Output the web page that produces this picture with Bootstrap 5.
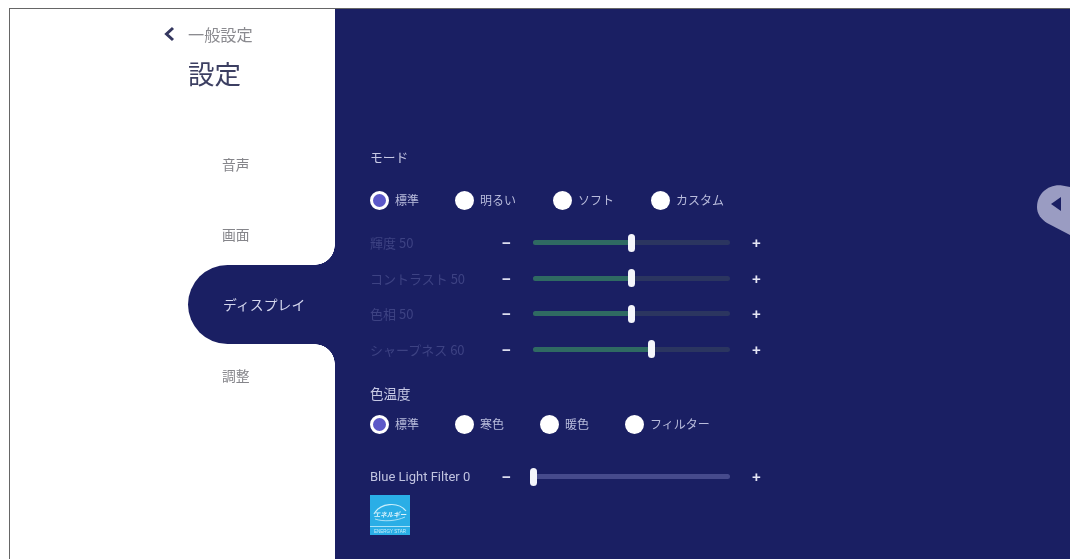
<!DOCTYPE html>
<html lang="ja">

<head>
    <meta charset="UTF-8">
    <meta name="viewport" content="width=device-width, initial-scale=1.0">
    <title>ディスプレイ設定</title>
    <link href="https://cdn.jsdelivr.net/npm/bootstrap@5.3.3/dist/css/bootstrap.min.css" rel="stylesheet">
    <script src="https://cdn.jsdelivr.net/npm/bootstrap@5.3.3/dist/js/bootstrap.bundle.min.js"></script>
    <style>
        html, body {
            height: 560px;
            overflow: hidden;
            background: #fff;
        }

        body {
            padding: 8px 4px 0 9px;
            font-family: "Noto Sans CJK JP", "Liberation Sans", sans-serif;
        }

        .screenFrame {
            width: 1061px;
            height: 551px;
            border-top: 1px solid #666;
            border-left: 1px solid #666;
            position: relative;
            filter: blur(0.5px);
        }

        .sideCol {
            width: 325px;
            flex: none;
            background: #fff;
        }

        .backRow {
            height: 40px;
            margin-top: 5px;
            padding-left: 153px;
            color: #8b8b90;
            font-size: 16.2px;
        }

        .backText {
            margin-left: 13px;
        }

        .sideTitle {
            margin: -2px 0 0 178px;
            height: 42px;
            font-size: 26.5px;
            line-height: 42px;
            font-weight: 400;
            color: #3c3f62;
        }

        .tabList {
            margin-top: 40px;
        }

        .sideTab {
            height: 79px;
            margin-top: -9px;
            padding-left: 212px;
            font-size: 13.8px;
            color: #85858a;
            position: relative;
        }

        .sideTab.activeTab {
            margin-left: 178px;
            padding-left: 35px;
            font-size: 13.8px;
            letter-spacing: 0.1px;
            color: #d5d7ee;
            background: #1a1f63;
            border-radius: 40px 0 0 40px;
            z-index: 1;
        }

        .sideTab.activeTab::before,
        .sideTab.activeTab::after {
            content: "";
            position: absolute;
            right: 0;
            width: 20px;
            height: 20px;
        }

        .sideTab.activeTab::before {
            top: -20px;
            background: radial-gradient(circle at 0 0, transparent 19.5px, #1a1f63 20px);
        }

        .sideTab.activeTab::after {
            bottom: -20px;
            background: radial-gradient(circle at 0 100%, transparent 19.5px, #1a1f63 20px);
        }

        .lastTab {
            top: 1px;
        }

        .mainPane {
            background: #1a1f63;
            padding: 136px 0 0 35px;
            color: #cfd1ea;
            font-size: 12px;
        }

        .groupHead {
            height: 24px;
            color: #c6c8e4;
            font-size: 12.8px;
        }

        .tempHead {
            margin-top: 14px;
            font-size: 13.5px;
        }

        .radioRow {
            height: 24px;
        }

        .modeRow {
            margin-top: 19px;
        }

        .tempRow {
            margin-top: 7px;
        }

        .radioItem {
            color: #b9bcdc;
            white-space: nowrap;
        }

        .radioItem .form-check-input {
            width: 19px;
            height: 19px;
            margin: 0 6px 0 0;
            background-color: #fff;
            background-image: none;
            border: 0;
        }

        .radioItem .form-check-input:checked {
            background-color: #5c58c8;
            background-image: none;
            border: 3px solid #fff;
        }

        .w85 { width: 85px; }
        .w98 { width: 98px; }

        .sliderStack {
            margin-top: 13px;
        }

        .sliderRow {
            height: 35.5px;
        }

        .blueRow {
            margin-top: 23px;
        }

        .sliderName {
            width: 131px;
            flex: none;
            white-space: nowrap;
            font-size: 13px;
            color: #3d4283;
        }

        .sliderName.liveName {
            color: #c0c3e0;
            font-family: "Roboto", "Noto Sans CJK JP", sans-serif;
        }

        .stepBtn {
            width: 11px;
            flex: none;
            color: #e4e5f4;
            font-family: "Liberation Sans", sans-serif;
            font-weight: 700;
            font-size: 15px;
            line-height: 1;
            text-align: center;
        }

        .trackWrap {
            width: 197px;
            flex: none;
            margin: 0 21px 0 21px;
            position: relative;
        }

        .trackWrap .progress {
            height: 5px;
            border-radius: 3px;
            background: #2b3560;
        }

        .trackWrap .progress-bar {
            background: #2f6a62;
        }

        .blueTrack .progress {
            background: #464a8c;
        }

        .sliderKnob {
            position: absolute;
            top: -6.5px;
            width: 7px;
            height: 18px;
            margin-left: -3.5px;
            border-radius: 4px;
            background: #f4f5fb;
        }

        .starLogo {
            display: block;
            width: 40px;
            height: 40px;
        }

        .edgeHandle {
            position: absolute;
            right: 0;
            top: 176px;
        }
    </style>
</head>

<body>
    <div class="screenFrame d-flex">

        <div class="sideCol">
            <div class="backRow d-flex align-items-center">
                <svg width="12" height="16" viewBox="0 0 12 16">
                    <path d="M10 2 3.5 8l6.500 6" fill="none" stroke="#34375f" stroke-width="3" />
                </svg>
                <span class="backText">一般設定</span>
            </div>
            <h1 class="sideTitle">設定</h1>
            <div class="tabList">
                <div class="sideTab d-flex align-items-center">音声</div>
                <div class="sideTab d-flex align-items-center">画面</div>
                <div class="sideTab activeTab d-flex align-items-center">ディスプレイ</div>
                <div class="sideTab lastTab d-flex align-items-center">調整</div>
            </div>
        </div>

        <div class="mainPane flex-grow-1">
            <div class="groupHead d-flex align-items-center">モード</div>

            <div class="radioRow modeRow d-flex align-items-center">
                <label class="radioItem d-flex align-items-center w85"><input class="form-check-input" type="radio" name="mode" checked>標準</label>
                <label class="radioItem d-flex align-items-center w98"><input class="form-check-input" type="radio" name="mode">明るい</label>
                <label class="radioItem d-flex align-items-center w98"><input class="form-check-input" type="radio" name="mode">ソフト</label>
                <label class="radioItem d-flex align-items-center"><input class="form-check-input" type="radio" name="mode">カスタム</label>
            </div>

            <div class="sliderStack">
                <div class="sliderRow d-flex align-items-center">
                    <span class="sliderName">輝度 50</span>
                    <span class="stepBtn">−</span>
                    <div class="trackWrap">
                        <div class="progress"><div class="progress-bar" style="width: 50%"></div></div>
                        <span class="sliderKnob" style="left: 50%"></span>
                    </div>
                    <span class="stepBtn">+</span>
                </div>
                <div class="sliderRow d-flex align-items-center">
                    <span class="sliderName">コントラスト 50</span>
                    <span class="stepBtn">−</span>
                    <div class="trackWrap">
                        <div class="progress"><div class="progress-bar" style="width: 50%"></div></div>
                        <span class="sliderKnob" style="left: 50%"></span>
                    </div>
                    <span class="stepBtn">+</span>
                </div>
                <div class="sliderRow d-flex align-items-center">
                    <span class="sliderName">色相 50</span>
                    <span class="stepBtn">−</span>
                    <div class="trackWrap">
                        <div class="progress"><div class="progress-bar" style="width: 50%"></div></div>
                        <span class="sliderKnob" style="left: 50%"></span>
                    </div>
                    <span class="stepBtn">+</span>
                </div>
                <div class="sliderRow d-flex align-items-center">
                    <span class="sliderName">シャープネス 60</span>
                    <span class="stepBtn">−</span>
                    <div class="trackWrap">
                        <div class="progress"><div class="progress-bar" style="width: 60%"></div></div>
                        <span class="sliderKnob" style="left: 60%"></span>
                    </div>
                    <span class="stepBtn">+</span>
                </div>
            </div>

            <div class="groupHead tempHead d-flex align-items-center">色温度</div>

            <div class="radioRow tempRow d-flex align-items-center">
                <label class="radioItem d-flex align-items-center w85"><input class="form-check-input" type="radio" name="temp" checked>標準</label>
                <label class="radioItem d-flex align-items-center w85"><input class="form-check-input" type="radio" name="temp">寒色</label>
                <label class="radioItem d-flex align-items-center w85"><input class="form-check-input" type="radio" name="temp">暖色</label>
                <label class="radioItem d-flex align-items-center"><input class="form-check-input" type="radio" name="temp">フィルター</label>
            </div>

            <div class="sliderRow blueRow d-flex align-items-center">
                <span class="sliderName liveName">Blue Light Filter 0</span>
                <span class="stepBtn">−</span>
                <div class="trackWrap blueTrack">
                    <div class="progress"><div class="progress-bar" style="width: 0%"></div></div>
                    <span class="sliderKnob" style="left: 0%"></span>
                </div>
                <span class="stepBtn">+</span>
            </div>

            <svg class="starLogo" viewBox="0 0 40 40">
                <rect width="40" height="40" fill="#2aaee6" />
                <rect x="0" y="31" width="40" height="1" fill="#a9e2f8" />
                <path d="M4 19C10 8 28 6 36 16" fill="none" stroke="#c8eefb" stroke-width="1.2" />
                <path d="M5 24c8 3 22 2 30-2" fill="none" stroke="#a9e2f8" stroke-width="1" />
                <text x="20" y="22" font-size="6.500" font-style="italic" font-weight="700" text-anchor="middle" fill="#dff5fd" font-family="Noto Sans CJK JP, sans-serif">エネルギー</text>
                <text x="20" y="37.500" font-size="4.500" text-anchor="middle" fill="#c8eefb" font-family="Liberation Sans, sans-serif">ENERGY STAR</text>
            </svg>
        </div>

        <svg class="edgeHandle" width="34" height="50" viewBox="0 0 34 50">
            <path d="M34 2 26 0.5C12 -1 1 9 1 22c0 7 4 12 10 16l23 12z" fill="#9a9cc2" />
            <path d="M15 19 25 12V26z" fill="#1a1f63" />
        </svg>
    </div>
</body>

</html>
